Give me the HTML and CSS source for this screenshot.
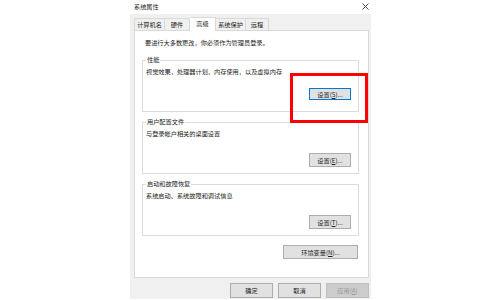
FILE: index.html
```html
<!DOCTYPE html>
<html lang="zh-CN">
<head>
    <meta charset="UTF-8">
    <title>系统属性</title>
    <link rel="stylesheet" href="styles.css">
</head>
<body>
    <div class="window">
        <div class="titlebar">
            <span>系统属性</span>
            <svg class="close" width="7" height="7" viewBox="0 0 7 7">
                <path d="M0.5 0.5 L6.5 6.5 M6.5 0.5 L0.5 6.5" stroke="#333" stroke-width="0.9"/>
            </svg>
        </div>
        <div class="body">
            <div class="tabs">
                <div class="tab" style="width: 31px">计算机名</div>
                <div class="tab" style="width: 25px">硬件</div>
                <div class="tab active" style="width: 26px">高级</div>
                <div class="tab" style="width: 30px">系统保护</div>
                <div class="tab" style="width: 23px">远程</div>
            </div>
            <div class="panel">
                <p class="intro">要进行大多数更改，你必须作为管理员登录。</p>

                <fieldset class="group">
                    <legend>性能</legend>
                    <p>视觉效果，处理器计划，内存使用，以及虚拟内存</p>
                    <div class="row"><button class="focused">设置(<u>S</u>)...</button></div>
                </fieldset>

                <fieldset class="group">
                    <legend>用户配置文件</legend>
                    <p>与登录帐户相关的桌面设置</p>
                    <div class="row"><button>设置(<u>E</u>)...</button></div>
                </fieldset>

                <fieldset class="group">
                    <legend>启动和故障恢复</legend>
                    <p>系统启动、系统故障和调试信息</p>
                    <div class="row"><button>设置(<u>T</u>)...</button></div>
                </fieldset>

                <div class="env-row"><button class="wide">环境变量(<u>N</u>)...</button></div>
            </div>
            <div class="footer">
                <button class="big">确定</button>
                <button class="big">取消</button>
                <button class="big" disabled>应用(<u>A</u>)</button>
            </div>
        </div>
    </div>
    <div class="highlight"></div>
</body>
</html>
```

FILE: styles.css
```css
body {
    margin: 0;
    background-color: #fff;
    font-family: "Noto Sans CJK SC", "Noto Sans", sans-serif;
    font-size: 6.2px;
    color: #222;
    position: relative;
    height: 300px;
    overflow: hidden;
}
.window {
    margin-left: 130px;
    width: 241px;
}
.titlebar {
    height: 14px;
    display: flex;
    justify-content: space-between;
    align-items: center;
    padding: 0 2px 2px 4px;
    box-sizing: border-box;
}
.close {
    display: block;
}
.body {
    background-color: #f0f0f0;
    height: 285px;
    padding: 3px 2px 0 4px;
    box-sizing: border-box;
}
.tabs {
    display: flex;
    height: 13px;
    align-items: flex-end;
}
.tab {
    height: 12px;
    line-height: 12px;
    text-align: center;
    border: 1px solid #d9d9d9;
    border-bottom: none;
    border-left: none;
    box-sizing: border-box;
    background-color: #f0f0f0;
}
.tab:first-child {
    border-left: 1px solid #d9d9d9;
}
.tab.active {
    height: 14px;
    line-height: 12px;
    background-color: #fff;
    margin-bottom: -1px;
    position: relative;
    z-index: 1;
}
.panel {
    background-color: #fff;
    border: 1px solid #d9d9d9;
    height: 248px;
    box-sizing: border-box;
    padding: 8px 9px 0 7px;
}
p {
    margin: 0;
    line-height: 8px;
}
.intro {
    padding-left: 3px;
}
.group {
    border: 1px solid #dcdcdc;
    margin: 9px 0 0 0;
    padding: 4px 7px 0 3px;
    height: 56px;
    box-sizing: border-box;
}
.group + .group {
    margin-top: 6px;
}
legend {
    padding: 0 1px;
    margin-left: 0;
    line-height: 8px;
}
.row {
    display: flex;
    justify-content: flex-end;
    margin-top: 12px;
}
.group:nth-of-type(2) .row,
.group:nth-of-type(3) .row {
    margin-top: 15px;
}
button {
    font-family: inherit;
    font-size: 6.2px;
    color: #222;
    width: 42px;
    height: 14px;
    padding: 0;
    background-color: #e1e1e1;
    border: 1px solid #adadad;
}
button.focused {
    height: 12px;
    border-color: #0078d7;
}
button.wide {
    width: 75px;
}
.env-row {
    display: flex;
    justify-content: flex-end;
    margin-top: 9px;
    padding-right: 1px;
}
.footer {
    display: flex;
    justify-content: flex-end;
    gap: 5px;
    margin-top: 5px;
}
button.big {
    width: 43px;
    height: 15px;
}
button:disabled {
    color: #999;
    background-color: #ccc;
    border-color: #bfbfbf;
}
.highlight {
    position: absolute;
    left: 290px;
    top: 73px;
    width: 78px;
    height: 50px;
    box-sizing: border-box;
    border: 3px solid #f00;
}
```
